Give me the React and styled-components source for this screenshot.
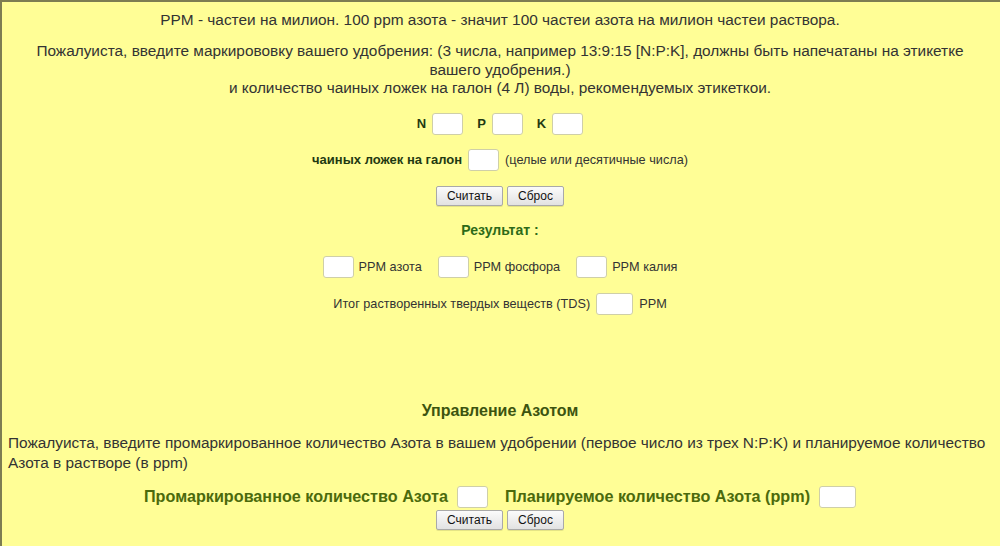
import React from 'react'
import styled, { createGlobalStyle } from 'styled-components'

const GlobalStyle = createGlobalStyle`
  html, body {
    margin: 0;
    padding: 0;
    background: #fffe96;
  }
  body {
    font-family: "Liberation Sans", Arial, sans-serif;
    color: #333;
  }
`

const Page = styled.div`
  min-height: 100vh;
  box-sizing: border-box;
  background: #fffe96;
  border-top: 2px solid #7d7d52;
  border-left: 2px solid #7d7d52;
  padding: 0 8px 0 6px;
  text-align: center;
`

const Lead = styled.p`
  margin: 9px 0 0;
  font-size: 15.4px;
  line-height: 18px;
`

const Note = styled.p`
  margin: 13px auto 0;
  max-width: 940px;
  font-size: 15.4px;
  line-height: 18.5px;
`

const Row = styled.div`
  display: flex;
  justify-content: center;
  align-items: center;
  gap: ${(p) => p.$gap || 6}px;
  margin-top: ${(p) => p.$top || 0}px;
  font-size: 13px;
`

const Label = styled.span`
  font-weight: bold;
  color: #1f3a12;
  font-size: 13px;
  margin-left: ${(p) => p.$lead || 0}px;
`

const Hint = styled.span`
  color: #333;
  font-size: 12.7px;
`

const Field = styled.input`
  box-sizing: border-box;
  width: ${(p) => p.$w || 31}px;
  height: 22px;
  border: 1px solid #cfcfa8;
  border-radius: 3px;
  background: #fff;
  padding: 0 3px;
  margin-left: ${(p) => p.$lead || 0}px;
  font: inherit;
`

const Button = styled.button`
  box-sizing: border-box;
  height: 20px;
  padding: 0 ${(p) => p.$pad || 10}px;
  font-family: "Liberation Sans", Arial, sans-serif;
  font-size: 12px;
  color: #111;
  background: linear-gradient(#fbfbfb, #e2e2e2);
  border: 1px solid #a9a9a9;
  border-radius: 2px;
  box-shadow: 0 1px 0 rgba(0, 0, 0, 0.1);
`

const ButtonRow = styled.div`
  display: flex;
  justify-content: center;
  gap: 4px;
  margin-top: ${(p) => p.$top || 0}px;
`

const ResultTitle = styled.div`
  margin-top: 16px;
  font-size: 14px;
  font-weight: bold;
  color: #2d6a18;
`

const SectionTitle = styled.h3`
  margin: 87px 0 0;
  font-size: 16px;
  font-weight: bold;
  color: #3c5410;
`

const Paragraph = styled.p`
  margin: 13px 0 0;
  text-align: left;
  font-size: 15.4px;
  line-height: 20px;
`

const BigLabel = styled.span`
  font-size: 16.2px;
  font-weight: bold;
  color: #4b6a0c;
  margin-left: ${(p) => p.$lead || 0}px;
`

export default function App() {
  return (
    <>
      <GlobalStyle />
      <Page>
        <Lead>
          PPM - частеи на милион. 100 ppm азота - значит 100 частеи азота на милион частеи раствора.
        </Lead>
        <Note>
          Пожалуиста, введите маркирововку вашего удобрения: (3 числа, например 13:9:15 [N:P:K], должны быть напечатаны на этикетке вашего удобрения.)
          <br />
          и количество чаиных ложек на галон (4 Л) воды, рекомендуемых этикеткои.
        </Note>

        <Row $top={15} $gap={6}>
          <Label>N</Label>
          <Field />
          <Label $lead={8}>P</Label>
          <Field />
          <Label $lead={8}>K</Label>
          <Field />
        </Row>

        <Row $top={14}>
          <Label>чаиных ложек на галон</Label>
          <Field />
          <Hint>(целые или десятичные числа)</Hint>
        </Row>

        <ButtonRow $top={15}>
          <Button>Считать</Button>
          <Button $pad={10}>Сброс</Button>
        </ButtonRow>

        <ResultTitle>Результат :</ResultTitle>

        <Row $top={18} $gap={5}>
          <Field />
          <Hint>PPM азота</Hint>
          <Field $lead={11} />
          <Hint>PPM фосфора</Hint>
          <Field $lead={11} />
          <Hint>PPM калия</Hint>
        </Row>

        <Row $top={15}>
          <Hint>Итог растворенных твердых веществ (TDS)</Hint>
          <Field $w={37} />
          <Hint>PPM</Hint>
        </Row>

        <SectionTitle>Управление Азотом</SectionTitle>
        <Paragraph>
          Пожалуиста, введите промаркированное количество Азота в вашем удобрении (первое число из трех N:P:K) и планируемое количество Азота в растворе (в ppm)
        </Paragraph>

        <Row $top={13} $gap={9}>
          <BigLabel>Промаркированное количество Азота</BigLabel>
          <Field />
          <BigLabel $lead={8}>Планируемое количество Азота (ppm)</BigLabel>
          <Field $w={37} />
        </Row>
        <ButtonRow $top={2}>
          <Button>Считать</Button>
          <Button $pad={10}>Сброс</Button>
        </ButtonRow>
      </Page>
    </>
  )
}
